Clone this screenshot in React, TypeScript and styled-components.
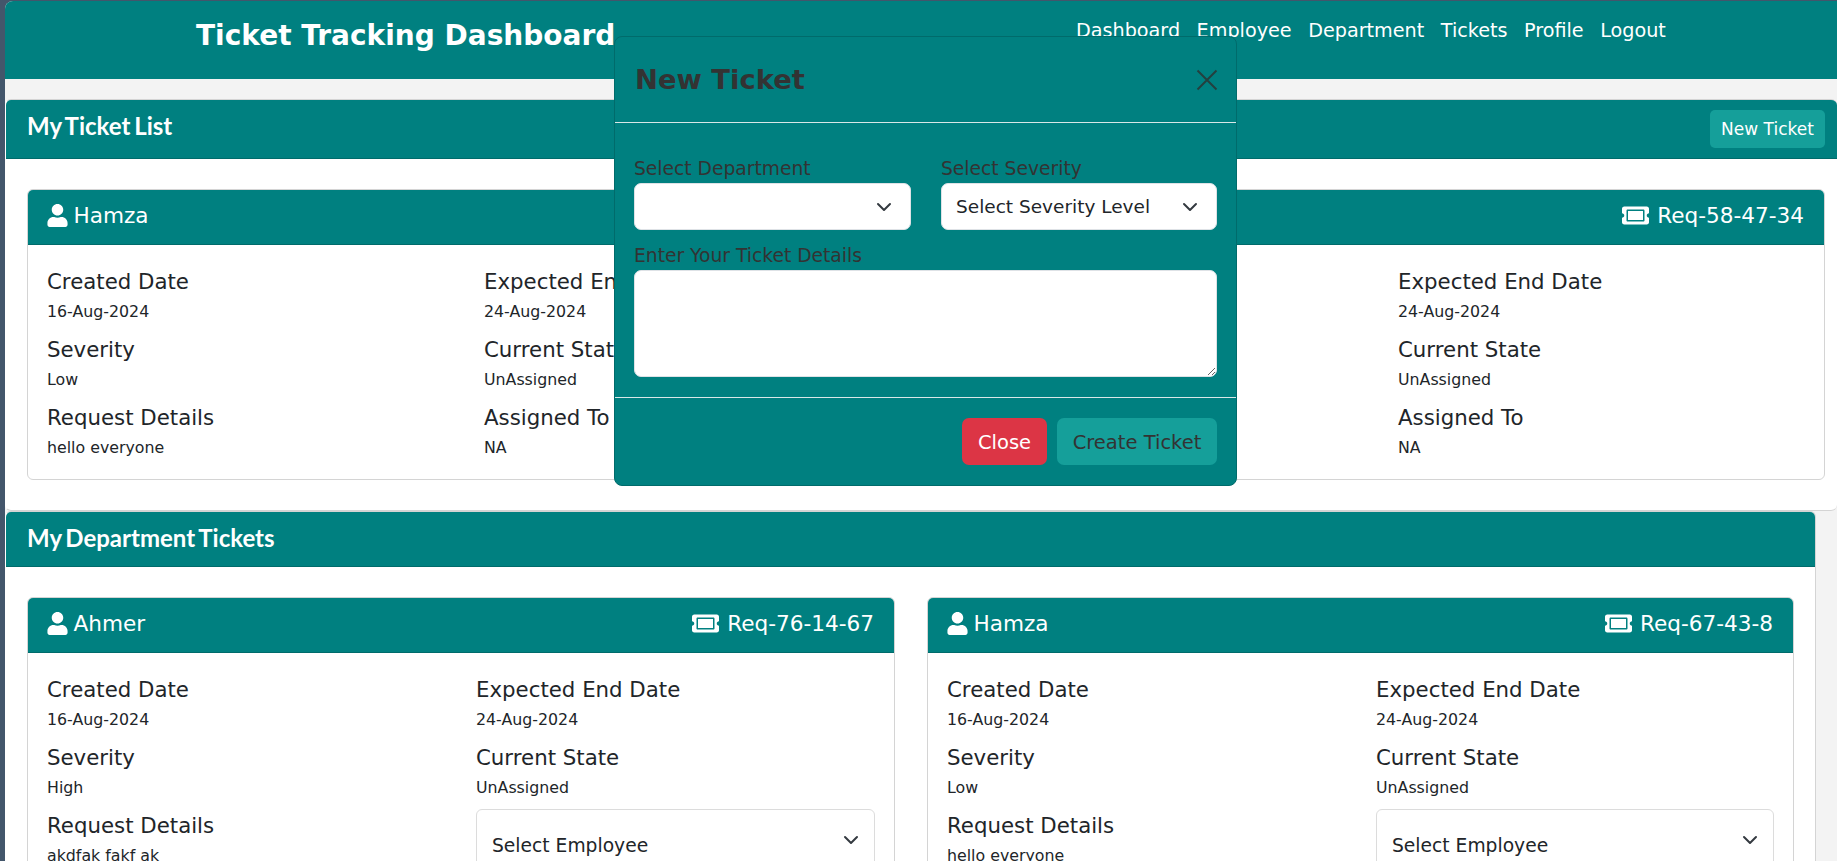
import React from "react";
import styled, { createGlobalStyle } from "styled-components";
import { FaUser, FaTicketAlt } from "react-icons/fa";

const Global = createGlobalStyle`
  html, body { margin: 0; padding: 0; height: 861px; overflow: hidden; background: #43566b; }
  body { font-family: "DejaVu Sans", sans-serif; }
  * { box-sizing: border-box; }
`;

const Page = styled.div`
  position: relative;
  margin: 1px 0 0 5px;
  height: 860px;
  background: #f3f3f3;
  border-top-left-radius: 8px;
  overflow: hidden;
`;
const TopBar = styled.header`
  height: 78px;
  background: #008080;
  color: #fff;
  display: flex;
  align-items: flex-start;
`;
const Brand = styled.h1`
  width: 880px;
  margin: 16px 0 0 191px;
  font-size: 28px;
  line-height: 38px;
  font-weight: 700;
  white-space: nowrap;
`;
const Nav = styled.nav`
  margin: 15px 0 0 0;
  display: flex;
  gap: 16.5px;
  font-size: 19.2px;
  line-height: 29px;
`;
const Section = styled.section<{ $narrow?: boolean }>`
  background: #fff;
  border-radius: ${(p) => (p.$narrow ? "6px 6px 0 0" : "6px")};
  margin-top: ${(p) => (p.$narrow ? "0" : "20px")};
  margin-right: ${(p) => (p.$narrow ? "21px" : "0")};
  border-top: 1px solid #d4d4d4;
  border-left: 1px solid #fff;
  border-right: ${(p) => (p.$narrow ? "1px solid #d4d4d4" : "0")};
  border-bottom: ${(p) => (p.$narrow ? "0" : "1px solid #d4d4d4")};
  overflow: hidden;
`;
const SectionHead = styled.div<{ $short?: boolean }>`
  height: ${(p) => (p.$short ? "55px" : "59px")};
  background: #008080;
  border-bottom: 1px solid #006b6b;
  color: #fff;
  padding: ${(p) => (p.$short ? "0 12px 0 21px" : "0 12px 4px 21px")};
  display: flex;
  align-items: center;
  justify-content: space-between;
`;
const SectionTitle = styled.h2`
  margin: 0 0 4px;
  font-family: Lato, "DejaVu Sans", sans-serif;
  font-size: 24px;
  font-weight: 700;
  word-spacing: -2px;
`;
const NewButton = styled.button`
  width: 115px;
  height: 38px;
  margin-top: 4px;
  border: 0;
  border-radius: 5px;
  background: #159f9a;
  color: #fff;
  font: 400 17px "DejaVu Sans", sans-serif;
`;
const Body = styled.div<{ $cols?: boolean }>`
  padding: 30px 12px 30px 21px;
  display: ${(p) => (p.$cols ? "grid" : "block")};
  grid-template-columns: 868px 867px;
  column-gap: 32px;
`;
const Card = styled.article`
  border: 1px solid #d4d4d4;
  border-radius: 6px;
  overflow: hidden;
  background: #fff;
`;
const CardHead = styled.div`
  height: 55px;
  background: #008080;
  border-bottom: 1px solid #006b6b;
  color: #fff;
  padding: 0 20px 3px 19px;
  display: flex;
  justify-content: space-between;
  align-items: center;
  font-size: 21.6px;
`;
const Tag = styled.span`
  display: flex;
  align-items: center;
  gap: 5px;
`;
const PersonIcon = styled(FaUser)`
  font-size: 23px;
  margin-left: -1.5px;
`;
const TicketIcon = styled(FaTicketAlt)`
  font-size: 27px;
  margin-right: 3px;
`;
const CardBody = styled.div<{ $template: string }>`
  padding: 21px 19px 0;
  height: 234px;
  display: grid;
  grid-template-columns: ${(p) => p.$template};
  align-content: start;
`;
const Field = styled.div`
  height: 68px;
`;
const FieldName = styled.div`
  font-size: 21.3px;
  line-height: 32px;
  color: #212529;
  white-space: nowrap;
`;
const FieldValue = styled.div`
  font-size: 15.8px;
  line-height: 22px;
  margin-top: 3px;
  color: #212529;
  white-space: nowrap;
`;
const EmployeeSelect = styled.div`
  margin-top: -1px;
  height: 90px;
  border: 1px solid #dcdcdc;
  border-radius: 6px;
  padding: 22px 15px 0;
  display: flex;
  justify-content: space-between;
  font-size: 18.7px;
  line-height: 28px;
  color: #212529;
`;
const ModalBox = styled.div`
  position: absolute;
  left: 609px;
  top: 35px;
  width: 623px;
  height: 450px;
  background: #008080;
  border: 1px solid #006b6b;
  border-radius: 8px;
  color: #333;
`;
const ModalHead = styled.div`
  height: 86px;
  padding: 0 18px 0 20px;
  border-bottom: 1px solid #d9e8e8;
  display: flex;
  align-items: center;
  justify-content: space-between;
`;
const ModalTitle = styled.h3`
  margin: 0;
  font-size: 27.4px;
  font-weight: 700;
  color: #333;
`;
const CloseX = styled.svg`
  width: 22px;
  height: 22px;
  fill: none;
  stroke: #24403f;
  stroke-width: 2;
`;
const ModalBody = styled.div`
  padding: 32px 19px 0;
  height: 275px;
  border-bottom: 1px solid #d9e8e8;
`;
const SelectRow = styled.div`
  display: grid;
  grid-template-columns: 277px 276px;
  column-gap: 30px;
`;
const Label = styled.label`
  display: block;
  font-size: 18.7px;
  line-height: 28px;
  color: #333;
  white-space: nowrap;
`;
const FakeSelect = styled.div`
  height: 47px;
  background: #fff;
  border: 1px solid #dee2e6;
  border-radius: 7px;
  padding: 0 18px 0 14px;
  display: flex;
  align-items: center;
  justify-content: space-between;
  font-size: 18.5px;
  color: #212529;
`;
const DetailsLabel = styled(Label)`
  margin-top: 12px;
`;
const TextBox = styled.textarea`
  display: block;
  width: 100%;
  height: 107px;
  border: 1px solid #dee2e6;
  border-radius: 7px;
  background: #fff;
`;
const ModalFoot = styled.div`
  padding: 20px 19px 0;
  display: flex;
  justify-content: flex-end;
  gap: 10px;
`;
const FootButton = styled.button<{ $danger?: boolean }>`
  width: ${(p) => (p.$danger ? "85px" : "160px")};
  height: 47px;
  padding: 1px 0 0;
  border: 0;
  border-radius: 7px;
  background: ${(p) => (p.$danger ? "#dc3545" : "#159f9a")};
  color: ${(p) => (p.$danger ? "#fff" : "#333")};
  font: 400 19.5px "DejaVu Sans", sans-serif;
`;
const ChevronSvg = styled.svg`
  width: 16px;
  height: 16px;
  flex: none;
  fill: none;
  stroke: #343a40;
  stroke-width: 2;
  stroke-linecap: round;
  stroke-linejoin: round;
`;

const Chevron = () => (
  <ChevronSvg viewBox="0 0 16 16"><path d="M2 5l6 6 6-6" /></ChevronSvg>
);

const F = ({ n, v }: { n: string; v: string }) => (
  <Field>
    <FieldName>{n}</FieldName>
    <FieldValue>{v}</FieldValue>
  </Field>
);

const Head = ({ name, req }: { name: string; req: string }) => (
  <CardHead>
    <Tag><PersonIcon />{name}</Tag>
    <Tag><TicketIcon />{req}</Tag>
  </CardHead>
);

const DeptCard = ({ name, req, sev, det }: { name: string; req: string; sev: string; det: string }) => (
  <Card>
    <Head name={name} req={req} />
    <CardBody $template="429px 1fr">
      <F n="Created Date" v="16-Aug-2024" />
      <F n="Expected End Date" v="24-Aug-2024" />
      <F n="Severity" v={sev} />
      <F n="Current State" v="UnAssigned" />
      <F n="Request Details" v={det} />
      <EmployeeSelect>Select Employee<Chevron /></EmployeeSelect>
    </CardBody>
  </Card>
);

export default function App() {
  return (
    <>
      <Global />
      <Page>
        <TopBar>
          <Brand>Ticket Tracking Dashboard</Brand>
          <Nav>
            <span>Dashboard</span><span>Employee</span><span>Department</span>
            <span>Tickets</span><span>Profile</span><span>Logout</span>
          </Nav>
        </TopBar>
        <Section>
          <SectionHead>
            <SectionTitle>My Ticket List</SectionTitle>
            <NewButton>New Ticket</NewButton>
          </SectionHead>
          <Body>
            <Card>
              <Head name="Hamza" req="Req-58-47-34" />
              <CardBody $template="437px 457px 457px 1fr">
                <F n="Created Date" v="16-Aug-2024" />
                <F n="Expected End Date" v="24-Aug-2024" />
                <F n="Created Date" v="16-Aug-2024" />
                <F n="Expected End Date" v="24-Aug-2024" />
                <F n="Severity" v="Low" />
                <F n="Current State" v="UnAssigned" />
                <F n="Severity" v="Low" />
                <F n="Current State" v="UnAssigned" />
                <F n="Request Details" v="hello everyone" />
                <F n="Assigned To" v="NA" />
                <F n="Request Details" v="hello everyone" />
                <F n="Assigned To" v="NA" />
              </CardBody>
            </Card>
          </Body>
        </Section>
        <Section $narrow>
          <SectionHead $short>
            <SectionTitle>My Department Tickets</SectionTitle>
          </SectionHead>
          <Body $cols>
            <DeptCard name="Ahmer" req="Req-76-14-67" sev="High" det="akdfak fakf ak" />
            <DeptCard name="Hamza" req="Req-67-43-8" sev="Low" det="hello everyone" />
          </Body>
        </Section>
        <ModalBox>
          <ModalHead>
            <ModalTitle>New Ticket</ModalTitle>
            <CloseX viewBox="0 0 22 22"><path d="M1.5 1.5l19 19M20.5 1.5l-19 19" /></CloseX>
          </ModalHead>
          <ModalBody>
            <SelectRow>
              <div>
                <Label>Select Department</Label>
                <FakeSelect><span /><Chevron /></FakeSelect>
              </div>
              <div>
                <Label>Select Severity</Label>
                <FakeSelect>Select Severity Level<Chevron /></FakeSelect>
              </div>
            </SelectRow>
            <DetailsLabel>Enter Your Ticket Details</DetailsLabel>
            <TextBox />
          </ModalBody>
          <ModalFoot>
            <FootButton $danger>Close</FootButton>
            <FootButton>Create Ticket</FootButton>
          </ModalFoot>
        </ModalBox>
      </Page>
    </>
  );
}
